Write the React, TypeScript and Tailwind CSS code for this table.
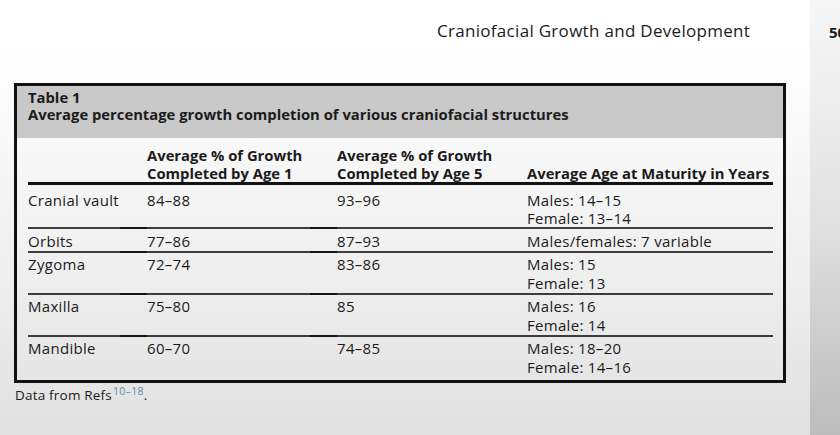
import React from "react";

type Row = {
  structure: string;
  byAge1: string;
  byAge5: string;
  maturity: string[];
};

const rows: Row[] = [
  {
    structure: "Cranial vault",
    byAge1: "84–88",
    byAge5: "93–96",
    maturity: ["Males: 14–15", "Female: 13–14"],
  },
  {
    structure: "Orbits",
    byAge1: "77–86",
    byAge5: "87–93",
    maturity: ["Males/females: 7 variable"],
  },
  {
    structure: "Zygoma",
    byAge1: "72–74",
    byAge5: "83–86",
    maturity: ["Males: 15", "Female: 13"],
  },
  {
    structure: "Maxilla",
    byAge1: "75–80",
    byAge5: "85",
    maturity: ["Males: 16", "Female: 14"],
  },
  {
    structure: "Mandible",
    byAge1: "60–70",
    byAge5: "74–85",
    maturity: ["Males: 18–20", "Female: 14–16"],
  },
];

// rule between rows; the darker bits are where cell rules overlap in the print
function RowRule() {
  return (
    <div className="flex h-[2px] w-[745px]">
      <div className="w-[92px] bg-[#3c3c3c]" />
      <div className="w-[27px] bg-[#151515]" />
      <div className="w-[163px] bg-[#3c3c3c]" />
      <div className="w-[27px] bg-[#151515]" />
      <div className="w-[436px] bg-[#3c3c3c]" />
    </div>
  );
}

export default function App() {
  return (
    <div
      className="flex h-[435px] w-[840px] overflow-hidden text-[#1b1b1b]"
      style={{ fontFamily: '"Open Sans", "Noto Sans", sans-serif' }}
    >
      <div className="flex w-[810px] flex-col bg-linear-to-b from-white from-10% via-[#f3f3f3] via-50% to-[#e1e1e1]">
        <div className="mt-[19px] pl-[437px] text-[17px] leading-[24px] tracking-[0.3px]">
          Craniofacial Growth and Development
        </div>

        <div className="ml-[14px] mt-[40px] flex h-[300px] w-[772px] flex-col border-[3px] border-[#111]">
          <div className="h-[52px] bg-[#c9c9c9] pl-[11px] pt-[3px] text-[14.8px] font-bold leading-[17px]">
            <div className="h-[17px]">Table 1</div>
            <div className="h-[17px]">
              Average percentage growth completion of various craniofacial
              structures
            </div>
          </div>

          <div className="flex flex-1 flex-col pl-[11px]">
            <div className="grid h-[44px] grid-cols-[119px_190px_190px_246px] items-end text-[14.8px] font-bold leading-[18px]">
              <div />
              <div>
                Average % of Growth
                <br />
                Completed by Age 1
              </div>
              <div>
                Average % of Growth
                <br />
                Completed by Age 5
              </div>
              <div className="whitespace-nowrap">
                Average Age at Maturity in Years
              </div>
            </div>
            <div className="h-[3px] w-[745px] bg-[#111]" />

            {rows.map((row, i) => (
              <div key={row.structure}>
                {i > 0 && <RowRule />}
                <div
                  className={
                    i === 0
                      ? "grid grid-cols-[119px_190px_190px_246px] pt-[7px] text-[15px] leading-[17.5px] tracking-[0.3px]"
                      : i === 1
                        ? "grid grid-cols-[119px_190px_190px_246px] pt-[3px] text-[15px] leading-[19px] tracking-[0.3px]"
                        : "grid grid-cols-[119px_190px_190px_246px] pt-[2px] text-[15px] leading-[19px] tracking-[0.3px]"
                  }
                >
                  <div>{row.structure}</div>
                  <div>{row.byAge1}</div>
                  <div>{row.byAge5}</div>
                  <div>
                    {row.maturity.map((line) => (
                      <div key={line}>{line}</div>
                    ))}
                  </div>
                </div>
              </div>
            ))}
          </div>
        </div>

        <div className="ml-[15px] mt-[3px] text-[13.5px] leading-[18px] tracking-[0.2px]">
          Data from Refs
          <sup className="ml-[1px] text-[10.5px] tracking-[0.3px] text-[#5a8ca8]">
            10–18
          </sup>
          .
        </div>
      </div>

      <div className="w-[30px] bg-linear-to-b from-[#f7f7f7] via-[#e2e2e2] to-[#bcbcbc] pl-[19px] pt-[22px] text-[15px] font-bold leading-[20px]">
        <span className="whitespace-nowrap">505</span>
      </div>
    </div>
  );
}
